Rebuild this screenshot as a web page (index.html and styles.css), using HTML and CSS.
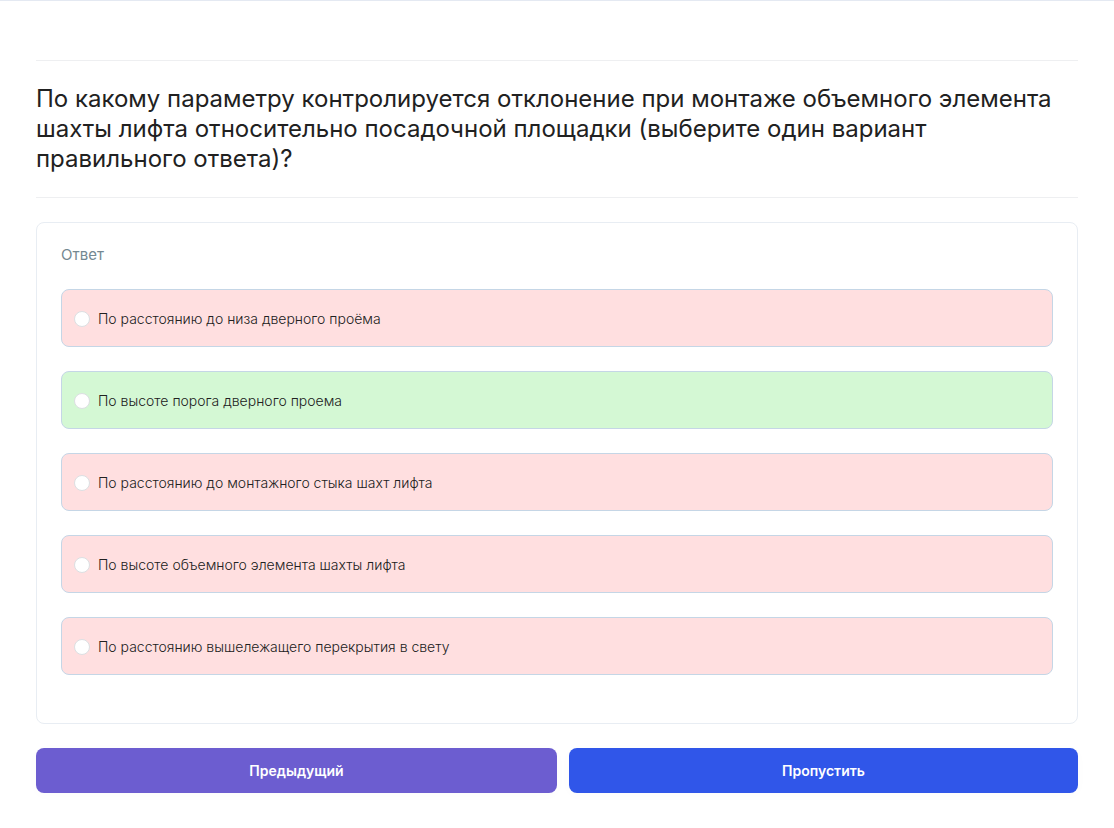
FILE: index.html
```html
<!DOCTYPE html>
<html lang="ru">
<head>
<meta charset="utf-8">
<meta name="viewport" content="width=device-width, initial-scale=1">
<title>Вопрос</title>
<link rel="stylesheet" href="styles.css">
</head>
<body>
<main class="quiz">
  <h1 class="question">По какому параметру контролируется отклонение при монтаже объемного элемента шахты лифта относительно посадочной площадки (выберите один вариант правильного ответа)?</h1>
  <form class="form">
    <fieldset class="card">
      <legend class="card-title">Ответ</legend>
      <div class="options">
        <label class="option wrong"><input class="radio" type="radio" name="answer"><span>По расстоянию до низа дверного проёма</span></label>
        <label class="option correct"><input class="radio" type="radio" name="answer"><span>По высоте порога дверного проема</span></label>
        <label class="option wrong"><input class="radio" type="radio" name="answer"><span>По расстоянию до монтажного стыка шахт лифта</span></label>
        <label class="option wrong"><input class="radio" type="radio" name="answer"><span>По высоте объемного элемента шахты лифта</span></label>
        <label class="option wrong"><input class="radio" type="radio" name="answer"><span>По расстоянию вышележащего перекрытия в свету</span></label>
      </div>
    </fieldset>
    <div class="actions">
      <button class="button previous" type="button">Предыдущий</button>
      <button class="button skip" type="button">Пропустить</button>
    </div>
  </form>
</main>
</body>
</html>
```

FILE: styles.css
```css
* {
  box-sizing: border-box;
}

body {
  margin: 0;
  background: #fff;
  color: #212529;
  font-family: Inter, "Liberation Sans", sans-serif;
  font-size: 14px;
  line-height: 20px;
}

.quiz {
  border-top: 1px solid #e4e9f2;
  padding: 59px 36px 35px;
}

.question {
  margin: 0 0 24px;
  padding: 23px 0;
  border-top: 1px solid #eeeff1;
  border-bottom: 1px solid #eeeff1;
  color: #212121;
  font-size: 24px;
  font-weight: 400;
  line-height: 30px;
}

.form {
  display: flex;
  flex-direction: column;
  gap: 24px;
}

.card {
  min-width: 0;
  margin: 0;
  padding: 22px 24px 48px;
  border: 1px solid #e8edf3;
  border-radius: 8px;
}

.card-title {
  float: left;
  width: 100%;
  margin-bottom: 24px;
  padding: 0;
  color: #748892;
  font-size: 15px;
}

.options {
  clear: both;
  display: flex;
  flex-direction: column;
  gap: 24px;
}

.option {
  display: flex;
  align-items: center;
  gap: 8px;
  padding: 19px 12px 17px;
  border: 1px solid #c5d6e6;
  border-radius: 8px;
  color: #212121;
  font-weight: 300;
}

.wrong {
  background: #ffdfe0;
}

.correct {
  background: #d4f8d4;
}

.radio {
  appearance: none;
  flex: none;
  width: 16px;
  height: 16px;
  margin: 0;
  border: 1px solid #dcdfe2;
  border-radius: 50%;
  background: #fff;
}

.radio:checked {
  border: 5px solid #2f55eb;
}

.actions {
  display: grid;
  grid-template-columns: 521fr 509fr;
  gap: 12px;
}

.button {
  padding: 12px;
  border: 0;
  border-radius: 8px;
  box-shadow: 0 2px 12px rgba(0, 0, 0, 0.02);
  color: #fff;
  font: inherit;
  font-weight: 600;
  line-height: 21px;
  cursor: pointer;
}

.previous {
  background: #6c5dd0;
}

.skip {
  background: #3056e9;
}
```
